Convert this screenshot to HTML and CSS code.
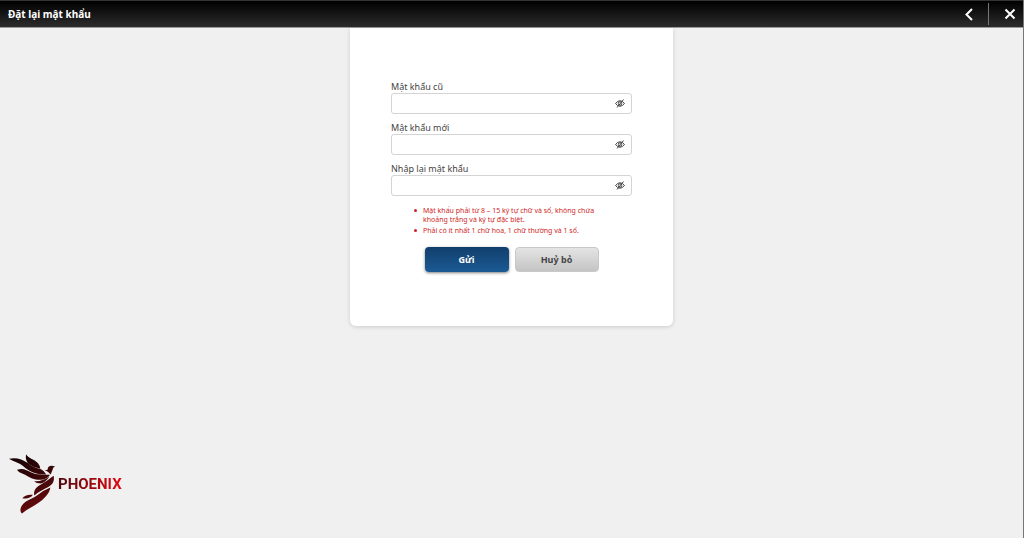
FILE: index.html
```
<!DOCTYPE html>
<html lang="vi">

<head>
  <meta charset="UTF-8">
  <title>Đặt lại mật khẩu</title>
  <meta name="viewport" content="width=device-width, initial-scale=1.0">
  <link rel="stylesheet" href="styles.css">
</head>

<body>
  <header class="topbar">
    <h1>Đặt lại mật khẩu</h1>
    <div class="topbar-actions">
      <button type="button" class="icon-btn back-btn" aria-label="Quay lại">
        <svg width="8" height="13" viewBox="0 0 8 13"><path d="M7 1 L1.500 6.500 L7 12" /></svg>
      </button>
      <button type="button" class="icon-btn close-btn" aria-label="Đóng">
        <svg width="12" height="12" viewBox="0 0 12 12"><path d="M1.500 1.500 L10.500 10.500 M10.500 1.500 L1.500 10.500" /></svg>
      </button>
    </div>
  </header>

  <svg class="symbols" aria-hidden="true">
    <symbol id="eye-off" viewBox="0 0 20 18">
      <path d="M1 9 Q10 -2 19 9 Q10 20 1 9 Z" />
      <circle cx="10" cy="9" r="3.500" />
      <path d="M4 17 L17 1" />
    </symbol>
  </svg>

  <main>
    <form class="card">
      <div class="field">
        <label for="oldPassword">Mật khẩu cũ</label>
        <div class="input-box">
          <input type="password" id="oldPassword">
          <button type="button" class="eye-btn" aria-label="Hiện mật khẩu"><svg><use href="#eye-off" /></svg></button>
        </div>
      </div>
      <div class="field">
        <label for="newPassword">Mật khẩu mới</label>
        <div class="input-box">
          <input type="password" id="newPassword">
          <button type="button" class="eye-btn" aria-label="Hiện mật khẩu"><svg><use href="#eye-off" /></svg></button>
        </div>
      </div>
      <div class="field">
        <label for="confirmPassword">Nhập lại mật khẩu</label>
        <div class="input-box">
          <input type="password" id="confirmPassword">
          <button type="button" class="eye-btn" aria-label="Hiện mật khẩu"><svg><use href="#eye-off" /></svg></button>
        </div>
      </div>
      <ul class="rules">
        <li>Mật khẩu phải từ 8 – 15 ký tự chữ và số, không chứa khoảng trắng và ký tự đặc biệt.</li>
        <li>Phải có ít nhất 1 chữ hoa, 1 chữ thường và 1 số.</li>
      </ul>
      <div class="buttons">
        <button type="submit" class="btn btn-primary">Gửi</button>
        <button type="button" class="btn btn-default">Huỷ bỏ</button>
      </div>
    </form>
  </main>

  <footer class="brand">
    <svg class="brand-mark" viewBox="27 29 138 179" aria-hidden="true">
      <defs>
        <linearGradient id="bird" x1="40" y1="40" x2="125" y2="200" gradientUnits="userSpaceOnUse">
          <stop offset="0" stop-color="#160304" />
          <stop offset="0.500" stop-color="#3d0709" />
          <stop offset="1" stop-color="#6d0a0d" />
        </linearGradient>
      </defs>
      <g fill="url(#bird)">
        <!-- wing -->
        <path d="M78 29 C86 42 104 44 114 56 Q120 63 121 73 Q103 70 88 60 Q75 50 78 29 Z" />
        <path d="M27 43 C46 38 67 43 82 55 C96 66 109 71 123 74 Q134 79 139 90 C109 91 86 80 70 65 C57 54 46 55 27 43 Z" />
        <path d="M51 76 C68 69 81 77 94 84 C110 92 130 90 150 91 Q142 104 124 106 C103 107 90 100 79 93 C69 86 61 89 51 76 Z" />
        <!-- head and body -->
        <path d="M132 75 Q138 78 143 75 C143 65 150 61 165 65 Q158 69 158 75 L152 90 Q146 82 132 75 Z" />
        <path d="M161 94 C164 111 158 120 146 127 C130 136 117 141 103 153 C99 137 110 126 124 119 C140 111 149 102 161 94 Z" />
        <path d="M102 110 Q123 113 148 97 Q137 114 122 117 Q109 117 102 110 Z" />
        <!-- tail -->
        <path d="M151 129 C149 144 139 156 126 167 C106 183 86 190 66 207 C58 199 61 188 70 178 C83 165 101 161 115 150 Q131 137 151 129 Z" />
        <path d="M67 161 Q77 148 99 151 Q87 166 67 161 Z" />
      </g>
    </svg>
    <span class="brand-name">PHOENIX</span>
  </footer>
</body>

</html>
```
FILE: styles.css
```
* {
  box-sizing: border-box;
}

body {
  margin: 0;
  min-height: 100vh;
  display: flex;
  flex-direction: column;
  background: #f0f0f0;
  border-right: 1px solid #777;
  font-family: "Noto Sans", "Open Sans", sans-serif;
  color: #444;
}

button,
input {
  font-family: inherit;
}

button {
  border: none;
  padding: 0;
  cursor: pointer;
}

.topbar {
  height: 28px;
  display: flex;
  align-items: center;
  justify-content: space-between;
  padding: 0 0 0 8px;
  background: linear-gradient(#000, #2c2c2c);
  border-top: 1px solid #333;
  border-bottom: 1px solid #999;
}

.topbar h1 {
  margin: 0;
  font-size: 10px;
  font-weight: 700;
  color: #fff;
}

.topbar-actions {
  display: flex;
  align-items: center;
}

.icon-btn {
  display: flex;
  align-items: center;
  background: none;
  height: 22px;
}

.icon-btn path {
  fill: none;
  stroke: #fff;
  stroke-width: 2;
}

.back-btn {
  padding-right: 15px;
  border-right: 1px solid #777;
}

.close-btn {
  padding: 0 7px 0 15px;
}

.symbols {
  display: none;
}

main {
  flex: 1;
}

.card {
  width: 323px;
  max-width: 100%;
  margin: 0 auto;
  padding: 53px 41px 54px;
  background: #fff;
  border-radius: 0 0 6px 6px;
  box-shadow: 0 1px 4px rgba(0, 0, 0, 0.15);
}

.field {
  margin-bottom: 8px;
}

.field label {
  display: block;
  font-size: 9px;
  line-height: 12px;
}

.input-box {
  height: 21px;
  display: flex;
  align-items: center;
  border: 1px solid #d4d4d4;
  border-radius: 3px;
  background: #fff;
}

.input-box:focus-within {
  border-color: #18568f;
}

.input-box input {
  flex: 1;
  min-width: 0;
  border: none;
  outline: none;
  background: none;
  padding: 0 6px;
  font-size: 9px;
}

.eye-btn {
  display: flex;
  margin-right: 6px;
  background: none;
}

.eye-btn svg {
  width: 10px;
  height: 9px;
  fill: none;
  stroke: #444;
  stroke-width: 2;
}

.rules {
  margin: 10px 0 0;
  padding: 0 24px 0 23px;
  list-style: none;
  font-size: 7px;
  line-height: 9px;
  color: #d01f26;
}

.rules li {
  display: flex;
  gap: 6px;
}

.rules li::before {
  content: "";
  flex: none;
  width: 3px;
  height: 3px;
  margin-top: 3px;
  border-radius: 50%;
  background: #d01f26;
}

.rules li + li {
  margin-top: 2px;
}

.buttons {
  display: flex;
  justify-content: center;
  gap: 6px;
  margin-top: 12px;
}

.btn {
  width: 84px;
  height: 25px;
  border-radius: 4px;
  font-size: 9px;
  font-weight: 700;
}

.btn-primary {
  color: #fff;
  background: linear-gradient(#113f6c, #1b5a94);
  box-shadow: 0 1px 3px rgba(0, 0, 0, 0.5);
}

.btn-default {
  color: #444;
  background: linear-gradient(#e4e4e4, #c4c4c4);
  border: 1px solid #c8c8c8;
}

.brand {
  display: flex;
  align-items: center;
  gap: 3px;
  padding: 0 9px 24px;
}

.brand-mark {
  width: 46px;
  height: 60px;
}

.brand-name {
  font-family: Roboto, "Liberation Sans", sans-serif;
  font-size: 15px;
  line-height: 20px;
  font-weight: 700;
  background: linear-gradient(90deg, #4c090c, #e40910);
  -webkit-background-clip: text;
  background-clip: text;
  color: transparent;
}
```
